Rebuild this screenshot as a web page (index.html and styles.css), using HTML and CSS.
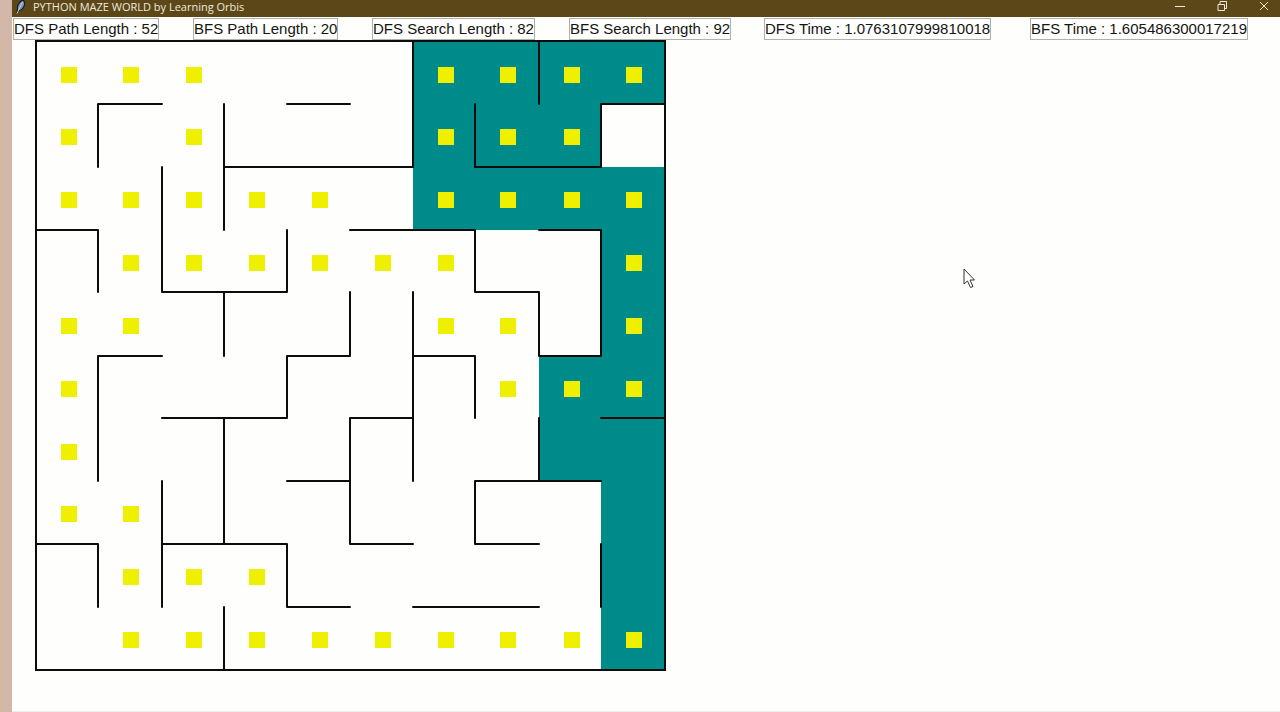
FILE: index.html
```html
<!DOCTYPE html>
<html lang="en">
<head>
<meta charset="utf-8">
<title>PYTHON MAZE WORLD by Learning Orbis</title>
<link rel="stylesheet" href="styles.css">
</head>
<body>
<div class="window">
  <header class="titlebar">
    <svg class="feather" viewBox="0 0 12 14" aria-hidden="true">
      <path d="M2 13 L2.500 9 Q2 3 8 0 Q11.500 3 8 8 Q6 11 3.500 10.500Z" fill="#7893b4" stroke="#18202c" stroke-width="1.200"/>
      <path d="M2 13.500 L7.500 2" stroke="#c5d5e8" stroke-width="1" fill="none"/>
    </svg>
    <h1 class="title">PYTHON MAZE WORLD by Learning Orbis</h1>
    <div class="controls">
      <button class="control" aria-label="Minimize"><svg viewBox="0 0 12 12"><path d="M1 6.500H11"/></svg></button>
      <button class="control" aria-label="Restore"><svg viewBox="0 0 12 12"><path d="M2 4.500H8.500V10.500H2ZM4 4V1.500H10.500V8.500H9"/></svg></button>
      <button class="control" aria-label="Close"><svg viewBox="0 0 12 12"><path d="M2 2L10 10M10 2L2 10"/></svg></button>
    </div>
  </header>
  <main class="content">
    <div class="stats">
      <span class="stat">DFS Path Length : 52</span>
      <span class="stat">BFS Path Length : 20</span>
      <span class="stat">DFS Search Length : 82</span>
      <span class="stat">BFS Search Length : 92</span>
      <span class="stat">DFS Time : 1.0763107999810018</span>
      <span class="stat">BFS Time : 1.605486300017219</span>
    </div>
    <svg class="maze" width="631" height="631" viewBox="0 0 631 631" role="img" aria-label="Maze">
      <path class="trail" d="M378 1H630V64H566V127H630V630H566V441H504V316H566V190H378Z"/>
      <path class="wall" d="M1 1H630V630H1Z
        M63 64H127M252 64H315M566 64H630
        M189 127H378M440 127H566
        M1 190H63M315 190H440M504 190H566
        M127 252H252M440 252H504
        M63 316H127M252 316H315M378 316H440M504 316H566
        M127 378H252M315 378H378M566 378H630
        M252 441H315M440 441H566
        M1 504H63M127 504H252M315 504H378M440 504H504
        M252 567H315M378 567H504
        M63 64V127M63 190V252M63 316V441M63 504V567
        M127 127V252M127 441V567
        M189 64V190M189 252V316M189 378V504M189 567V630
        M252 190V252M252 316V378M252 504V567
        M315 252V316M315 378V504
        M378 1V127M378 252V441
        M440 64V127M440 190V252M440 316V378M440 441V504
        M504 1V64M504 252V316M504 378V441
        M566 64V127M566 190V316M566 504V567"/>
      <path class="agent" d="M26 35h16M88 35h16M151 35h16M403 35h16M465 35h16M529 35h16M591 35h16
        M26 97h16M151 97h16M403 97h16M465 97h16M529 97h16
        M26 160h16M88 160h16M151 160h16M214 160h16M277 160h16M403 160h16M465 160h16M529 160h16M591 160h16
        M88 223h16M151 223h16M214 223h16M277 223h16M340 223h16M403 223h16M591 223h16
        M26 286h16M88 286h16M403 286h16M465 286h16M591 286h16
        M26 349h16M465 349h16M529 349h16M591 349h16
        M26 412h16
        M26 474h16M88 474h16
        M88 537h16M151 537h16M214 537h16
        M88 600h16M151 600h16M214 600h16M277 600h16M340 600h16M403 600h16M465 600h16M529 600h16M591 600h16"/>
    </svg>
  </main>
  <svg class="pointer" viewBox="0 0 12 21" aria-hidden="true"><path d="M1 1V16L4.500 13L7.500 19.500L10 18.500L7 12H11.500Z"/></svg>
</div>
</body>
</html>
```
FILE: styles.css
```css
* { box-sizing: border-box; }
body {
  margin: 0;
  padding-left: 12px;
  background: #d3b8aa;
  font-family: "Liberation Sans", Arial, sans-serif;
  color: #151515;
}
.window {
  position: relative;
  min-height: 100vh;
  background: #fefefd;
  border-bottom: 1px solid #eeeeee;
}
.titlebar {
  display: flex;
  align-items: center;
  height: 17px;
  padding: 0 10px 0 3px;
  background: #5c4719;
}
.feather {
  width: 12px;
  height: 14px;
  margin-bottom: 4px;
}
.title {
  margin: 0 auto 4px 6px;
  font: 400 11px/14px "Open Sans", "Noto Sans", sans-serif;
  color: #efe9dc;
}
.controls {
  display: flex;
  gap: 30px;
  margin-bottom: 6px;
}
.control {
  width: 12px;
  height: 12px;
  padding: 0;
  border: 0;
  background: none;
}
.control svg {
  display: block;
  width: 12px;
  height: 12px;
  fill: none;
  stroke: #eee8dc;
}
.stats {
  display: grid;
  grid-template-columns: 180px 179px 197px 195px 266px auto;
  justify-items: start;
  padding: 1px 0 0 1px;
}
.stat {
  border: 1px solid #b0b0ac;
  font-size: 15px;
  line-height: 20px;
  white-space: nowrap;
}
.maze {
  display: block;
  margin-left: 23px;
}
.trail { fill: #008b8b; }
.wall {
  fill: none;
  stroke: #0c0c0c;
  stroke-width: 2;
  stroke-linecap: round;
}
.agent {
  stroke: #eef000;
  stroke-width: 16;
}
.pointer {
  position: absolute;
  left: 951px;
  top: 268px;
  width: 12px;
  height: 21px;
  fill: #fff;
  stroke: #333;
}
```
